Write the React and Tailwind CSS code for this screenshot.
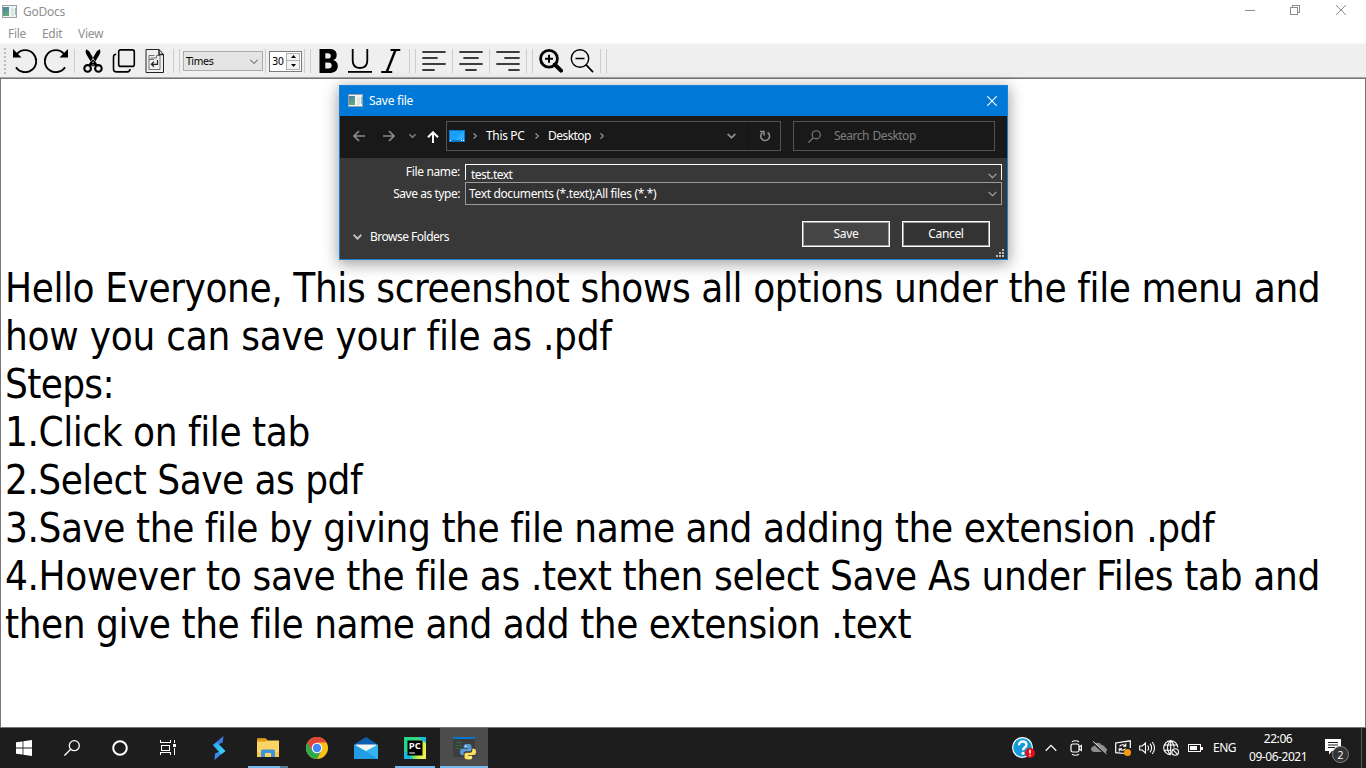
import React from "react";

const Icon = ({ className = "", size = 24, w, h, box, children, ...rest }) => (
  <svg
    width={w || size}
    height={h || size}
    viewBox={box || `0 0 ${w || size} ${h || size}`}
    fill="none"
    stroke="currentColor"
    className={`shrink-0 ${className}`}
    {...rest}
  >
    {children}
  </svg>
);

const Sep = ({ className = "ml-[6px]" }) => (
  <div className={`h-6 w-px shrink-0 bg-[#cdcdcd] ${className}`} />
);

const AppIcon = ({ className = "" }) => (
  <Icon w={15} h={13} className={className} stroke="none">
    <defs>
      <linearGradient id="appwin" x1="0" y1="0" x2="0.4" y2="1">
        <stop offset="0" stopColor="#4d7fae" />
        <stop offset="1" stopColor="#5fa879" />
      </linearGradient>
    </defs>
    <rect width="15" height="13" fill="#9aa3aa" />
    <rect x="1" y="1" width="13" height="11" fill="#f1f3f4" />
    <rect x="1" y="2" width="6" height="9" fill="url(#appwin)" />
    <rect x="9" y="3" width="3" height="8" fill="#dfe5e8" />
    <rect x="13" y="3" width="1" height="7" fill="#94bda8" />
  </Icon>
);

const TitleBar = () => (
  <div className="flex h-[23px] items-center bg-white text-[12px] text-[#8f8f8f]">
    <AppIcon className="mb-px ml-[2px]" />
    <span className="ml-[6px] tracking-[-0.25px]">GoDocs</span>
    <div className="mb-[3px] ml-auto flex h-5 items-center gap-[35px] pr-5 text-[#8c8c8c]">
      <Icon size={10} shapeRendering="crispEdges"><path d="M0 5.5h10" /></Icon>
      <Icon size={10} shapeRendering="crispEdges"><path d="M.5 2.5h7v7h-7zM2.5 2.5v-2h7v7h-2" /></Icon>
      <Icon size={10} className="ml-[1px]"><path d="M0 0l10 10M10 0L0 10" /></Icon>
    </div>
  </div>
);

const MenuBar = () => (
  <div className="flex h-[22px] items-center border-b-2 border-[#f4f4f4] bg-white pt-[2px] text-[12px] tracking-[-0.3px] text-[#8f8f8f]">
    <span className="ml-2 w-[34px]">File</span>
    <span className="w-9">Edit</span>
    <span>View</span>
  </div>
);

const AlignIcon = ({ d }) => (
  <Icon className="ml-[6px] text-[#3c3c3c]" strokeWidth="1.8" strokeLinecap="round"><path d={d} /></Icon>
);

const ToolBar = () => (
  <div className="flex h-[33px] items-center border-b border-[#a6a6a6] bg-[#efefef] text-black">
    <Icon w={2} h={26} className="ml-[4px] text-[#bcbcbc]" strokeWidth="2" strokeDasharray="2 2"><path d="M1 0v26" /></Icon>
    <Icon className="ml-[7px]" strokeWidth="1.9">
      <path d="M4 4.8A11 11 0 1 1 3 18.2" />
      <path d="M0 0l8.500 8.500H0z" fill="currentColor" stroke="none" />
    </Icon>
    <Icon className="ml-[7px]" strokeWidth="1.9">
      <path d="M20 4.8A11 11 0 1 0 21 18.2" />
      <path d="M24 0l-8.500 8.500h8.500z" fill="currentColor" stroke="none" />
    </Icon>
    <Sep />
    <Icon className="ml-[6px]" strokeWidth="2.1">
      <path d="M5.300 0.300c-1.200 2-.6 4 .6 6l6.800 11.200 2.400-3.500L8.200 2.200zM18.700.300c1.200 2 .6 4-.6 6l-6.800 11.200-2.400-3.500 6.900-11.800z" fill="currentColor" stroke="none" />
      <circle cx="6.600" cy="19.400" r="3.300" />
      <circle cx="17.400" cy="19.400" r="3.300" />
      <path d="M8.500 16.500l3.500-4 3.500 4" strokeWidth="3" />
      <circle cx="12" cy="13.200" r=".7" fill="#efefef" stroke="none" />
    </Icon>
    <Icon className="ml-[7px]" strokeWidth="1.600">
      <rect x="6.700" y=".9" width="15.600" height="16.500" rx="2" />
      <path d="M4.200 5.200c-2 0-2.700.7-2.700 2.700v12c0 2.300.8 3 3 3h10.500c2 0 3-.8 3-2.800" />
    </Icon>
    <Icon className="ml-[7px] text-[#222]" strokeWidth="1">
      <path d="M3 .5h13l4.500 5v18H3z" />
      <path d="M16 .5v5h4.500" strokeWidth="1.500" />
      <path d="M11.500 6.500H6v14h11v-14h-3.500v2.500h-6M6 10.500h5" strokeOpacity=".6" />
      <path d="M14.500 11v4.300H8.500M11 12.800l-2.600 2.500 2.600 2.500" strokeWidth="1.200" />
    </Icon>
    <Sep />
    <Sep className="ml-[5px]" />
    <div className="ml-[3px] flex h-5 w-20 shrink-0 items-center border border-[#acacac] bg-[#e4e4e4] pl-[2px] font-['DejaVu_Sans_Condensed','DejaVu_Sans',sans-serif] text-[11px]">
      <span className="pt-[2px] tracking-[-0.35px]">Times</span>
      <Icon w={8} h={5} className="ml-auto mr-[4px] text-[#444]"><path d="M0 .5l4 4 4-4" /></Icon>
    </div>
    <Sep className="ml-[2px]" />
    <div className="ml-[3px] flex h-[21px] w-[33px] shrink-0 items-center border border-[#7a7a7a] bg-white pl-[2px] font-['DejaVu_Sans_Condensed','DejaVu_Sans',sans-serif] text-[11px]">
      <span className="pt-[2px] tracking-[-0.5px]">30</span>
      <div className="ml-auto mr-px flex h-[17px] w-[14px] flex-col items-center justify-around border border-[#b0b0b0] bg-[#f3f3f3]">
        <Icon w={5} h={3} stroke="none"><path d="M2.500 0L5 3H0z" fill="#000" /></Icon>
        <div className="h-px w-full bg-[#b0b0b0]" />
        <Icon w={5} h={3} stroke="none"><path d="M2.500 3L5 0H0z" fill="#000" /></Icon>
      </div>
    </div>
    <Sep className="ml-[2px]" />
    <Sep className="ml-[5px]" />
    <Icon className="ml-[6px]" stroke="none">
      <path fillRule="evenodd" fill="currentColor" d="M2.500 0H12c5 0 7.700 2 7.700 5.900 0 2.800-1.400 4.600-3.800 5.100 3 .5 4.900 2.600 4.900 6 0 4.700-3.200 7-8.600 7H2.500zM8.300 4.300v5.300h2.600c1.900 0 2.900-.9 2.900-2.700 0-1.800-1-2.600-3-2.600zm0 9.200v6h3c2.300 0 3.400-1 3.400-3s-1.100-3-3.400-3z" />
    </Icon>
    <Icon className="ml-[7px]" strokeWidth="1.800">
      <path d="M4.700 0v11.500c0 5 2.700 7.500 7.300 7.500s7.300-2.500 7.300-7.500V0" />
      <path d="M0 22.900h24" />
    </Icon>
    <Icon className="ml-[7px]" strokeWidth="1.800">
      <path d="M11.500 1h9.800M2.200 23h11" />
      <path d="M16.500 1L7.700 23" strokeWidth="2.400" />
    </Icon>
    <Sep />
    <Sep className="ml-[5px]" />
    <AlignIcon d="M1 3h22M1 9h14M1 15h22M1 21h11" />
    <Sep />
    <AlignIcon d="M1 3h22M5 9h14M1 15h22M7 21h10" />
    <Sep />
    <AlignIcon d="M1 3h22M9 9h14M1 15h22M13 21h10" />
    <Sep />
    <Sep className="ml-[5px]" />
    <Icon className="ml-[6px]" strokeWidth="2.800">
      <circle cx="10" cy="9.800" r="8.400" />
      <path d="M10 5.800v8M6 9.800h8" strokeWidth="2" />
      <path d="M15.800 15.500l6.200 6.200" strokeWidth="4" strokeLinecap="round" />
    </Icon>
    <Icon className="ml-[7px]" strokeWidth="1.400">
      <circle cx="10" cy="9.500" r="8.700" />
      <path d="M5.500 9.500h9M16.200 15.800l6.800 7.400" strokeWidth="1.700" />
    </Icon>
    <Sep />
    <Sep className="ml-[5px]" />
  </div>
);

const LINES = [
  ["Hello Everyone, This screenshot shows all options under the file menu and", "tracking-[-0.4px]"],
  ["how you can save your file as .pdf", "tracking-[-0.26px]"],
  ["Steps:", "tracking-[-0.65px]"],
  ["1.Click on file tab", "tracking-[-0.43px]"],
  ["2.Select Save as pdf", "tracking-[-0.5px]"],
  ["3.Save the file by giving the file name and adding the extension .pdf", "tracking-[-0.43px]"],
  ["4.However to save the file as .text then select Save As under Files tab and", "tracking-[-0.36px]"],
  ["then give the file name and add the extension .text", "tracking-[-0.45px]"],
];

const Editor = () => (
  <div className="h-[650px] border border-[#767676] bg-white pl-1 pt-[185px] font-['DejaVu_Sans_Condensed','DejaVu_Sans',sans-serif] text-[40px] leading-[48px] text-black">
    {LINES.map(([text, cls]) => (
      <div key={text} className="whitespace-pre">
        <span className={cls}>{text}</span>
      </div>
    ))}
  </div>
);

const Crumb = ({ className = "" }) => (
  <Icon w={4} h={6} className={`text-[#8c8c8c] ${className}`} strokeWidth="1.400"><path d="M.5.3L3.300 3 .5 5.700" /></Icon>
);

const Down = ({ className, w = 9, sw = 1.7 }) => (
  <Icon w={w} h={6} box="0 0 9 6" className={className} strokeWidth={sw}><path d="M.6.8l3.900 3.900L8.400.8" /></Icon>
);

const SaveDialog = () => (
  <div className="absolute left-[339px] top-[85px] flex h-[175px] w-[669px] flex-col border border-[#1680d8] bg-[#383838] text-[12px] tracking-[-0.35px] text-white shadow-[0_3px_14px_1px_rgba(0,0,0,0.38)]">
    <div className="flex h-[30px] shrink-0 items-center bg-[#0078d7] pb-px pl-2 pr-[10px]">
      <AppIcon />
      <span className="ml-[6px] mt-px tracking-[-0.25px]">Save file</span>
      <Icon size={10} className="ml-auto" strokeWidth="1.200"><path d="M.3.3l9.400 9.400M9.700.3L.3 9.700" /></Icon>
    </div>
    <div className="flex h-[42px] shrink-0 items-center bg-[#191919] pb-[2px]">
      <Icon size={12} className="ml-[13px] text-[#8a8a8a]" strokeWidth="1.700"><path d="M12 6H1M6 1L1 6l5 5" /></Icon>
      <Icon size={12} className="ml-[18px] text-[#8a8a8a]" strokeWidth="1.700"><path d="M0 6h11M6 1l5 5-5 5" /></Icon>
      <Down w={7} sw={2} className="ml-[14px] text-[#777]" />
      <Icon size={12} className="ml-[11px] mt-[2px]" strokeWidth="2"><path d="M6 12V1.300M1 6.300l5-5 5 5" /></Icon>
      <div className="ml-[7px] flex h-[30px] w-[335px] items-center border border-[#535353] pl-[2px]">
        <Icon w={16} h={12} stroke="none" className="mb-px">
          <rect width="16" height="12" fill="#0a78d0" />
          <path d="M1 1h14v9H1z" fill="#18a0fb" />
          <path d="M15 1v9H6z" fill="#2eadff" />
          <path d="M1 10h1v1H1zM12 10h1v1h-1zM14 10h1v1h-1z" fill="#fff" />
        </Icon>
        <Crumb className="ml-[8px]" />
        <span className="ml-[9px] w-[49px] whitespace-nowrap">This PC</span>
        <Crumb />
        <span className="ml-[9px] w-[52px] whitespace-nowrap tracking-[-0.550px]">Desktop</span>
        <Crumb />
        <Down className="ml-auto text-[#8c8c8c]" />
        <div className="ml-[11px] h-7 w-px bg-[#131313]" />
        <Icon size={12} className="ml-[11px] mr-[9px] text-[#8c8c8c]" strokeWidth="1.600">
          <path d="M8.600 2.500A4.400 4.400 0 1 1 3.400 2.700M1 1.500h4v4" />
        </Icon>
      </div>
      <div className="ml-3 flex h-[30px] w-[202px] items-center border border-[#535353] text-[#7f7f7f]">
        <Icon size={13} className="ml-[14px]" strokeWidth="1.100">
          <circle cx="8.200" cy="4.800" r="4.100" />
          <path d="M5.200 7.800L.5 12.500" />
        </Icon>
        <span className="ml-[13px] tracking-[-0.5px] [word-spacing:1px]">Search Desktop</span>
      </div>
    </div>
    <div className="mt-[6px] flex h-4 shrink-0">
      <span className="w-[120px] text-right leading-[16px]">File name:</span>
      <div className="ml-[5px] flex h-4 w-[537px] items-end border border-b-0 border-white pl-[5px] pr-1">
        <span className="h-[14px] leading-[17px] tracking-[-0.5px]">test.text</span>
        <Down sw={1.2} className="mb-px ml-auto text-[#a5a5a5]" />
      </div>
    </div>
    <div className="mt-[2px] flex h-[23px] shrink-0">
      <span className="w-[120px] text-right leading-[23px] tracking-[-0.450px]">Save as type:</span>
      <div className="ml-[5px] flex w-[537px] items-center border border-[#9b9b9b] bg-[#333] pl-[3px] pr-1">
        <span>Text documents (*.text);All files (*.*)</span>
        <Down sw={1.2} className="ml-auto text-[#a5a5a5]" />
      </div>
    </div>
    <div className="mt-4 flex h-[26px] shrink-0">
      <Down sw={2} className="ml-[13px] mt-[13px] text-[#bdbdbd]" />
      <span className="ml-2 mt-[6px] h-5 leading-[20px] tracking-[-0.5px]">Browse Folders</span>
      <div className="ml-auto grid h-[26px] w-[88px] place-items-center border border-white bg-[#454545] shadow-[inset_0_0_0_1px_#a0a0a0]">Save</div>
      <div className="ml-3 mr-[17px] grid h-[26px] w-[88px] place-items-center border border-white bg-[#333] shadow-[inset_0_0_0_1px_#a0a0a0]">Cancel</div>
    </div>
    <Icon size={8} stroke="none" className="ml-auto mr-[3px] mt-[2px]">
      <path d="M6 0h2v2H6zM3 3h2v2H3zM6 3h2v2H6zM0 6h2v2H0zM3 6h2v2H3zM6 6h2v2H6z" fill="#bdbdbd" />
    </Icon>
  </div>
);

const Slot = ({ className = "", children }) => (
  <div className={`relative grid h-10 w-12 shrink-0 place-items-center ${className}`}>{children}</div>
);

const Bar = ({ className = "inset-x-1" }) => (
  <div className={`absolute bottom-0 h-[2px] bg-[#76b9ed] ${className}`} />
);

const Taskbar = () => (
  <div className="flex h-10 items-center bg-[#1d1d1d] text-white">
    <Slot>
      <Icon size={16} stroke="none"><path d="M0 2.300l6.600-.9v6.200H0zM7.400 1.300L16 0v7.600H7.400zM0 8.400h6.600v6.200L0 13.700zM7.400 8.400H16V16l-8.600-1.300z" fill="#fff" /></Icon>
    </Slot>
    <Slot>
      <Icon size={16} strokeWidth="1.300"><circle cx="10.300" cy="5.700" r="5" /><path d="M6.700 9.300L.4 15.600" /></Icon>
    </Slot>
    <Slot><Icon size={16} strokeWidth="2"><circle cx="8" cy="8" r="6.800" /></Icon></Slot>
    <Slot>
      <Icon size={16} strokeWidth="1" shapeRendering="crispEdges">
        <path d="M.5 0v2.500h10V0M.5 15v-2.500h10V15M1.500 5.500h8v5h-8zM14.500 0v3M14.500 8v7" />
        <path d="M13 4h3v3h-3z" fill="#fff" stroke="none" />
      </Icon>
    </Slot>
    <div className="ml-[3px] flex gap-px">
      <Slot>
        <Icon w={14} h={24} stroke="none">
          <defs>
            <linearGradient id="bolt" x1="0" y1="0" x2="1" y2="1">
              <stop offset="0" stopColor="#2f9df4" /><stop offset="1" stopColor="#35e0f5" />
            </linearGradient>
          </defs>
          <path d="M11.500 0L.8 9l3 .5 7-3z" fill="#3b7be0" />
          <path d="M2.500 24L13 15l-3-.5-7 3z" fill="#3b8be8" />
          <path d="M.8 9l4.200-2.800 8.500 8.800-4.300 3.300z" fill="url(#bolt)" />
        </Icon>
      </Slot>
      <Slot>
        <Icon w={22} h={20} stroke="none" className="-ml-[1px]">
          <path d="M0 2V1.500Q0 .5 1 .5h7.500l2 2H22V19H0z" fill="#fbd465" />
          <path d="M0 2.500V.5h9l1.300 1.700L8.500 3.500H0z" fill="#e59b12" />
          <path d="M0 14h22v4.500H0z" fill="#f7c64b" />
          <path d="M4 19v-6q0-1.500 1.500-1.500h11Q18 11.500 18 13v6h-4v-4H8v4z" fill="#3b94dc" />
          <path d="M8 15h6v4H8z" fill="#fbd465" />
        </Icon>
        <Bar className="left-1 w-8" />
        <Bar className="left-9 w-2 opacity-60" />
      </Slot>
      <Slot>
        <Icon size={22} stroke="none">
          <circle cx="11" cy="11" r="11" fill="#fbc116" />
          <path d="M1.474 5.500A11 11 0 0 0 11 22l4.500-8.500L11 11z" fill="#2da94f" />
          <path d="M1.474 5.500A11 11 0 0 1 20.526 5.500H11L6.200 13.700z" fill="#e0453a" />
          <circle cx="11" cy="11" r="5.300" fill="#fff" />
          <circle cx="11" cy="11" r="4.200" fill="#4386f5" />
        </Icon>
      </Slot>
      <Slot>
        <Icon w={24} h={22} stroke="none">
          <path d="M0 7.500L12 0l12 7.500V22H0z" fill="#0a5fae" />
          <path d="M1.500 7.500h21V16h-21z" fill="#f4f4f4" />
          <path d="M0 7.500L12 14l12-6.500V22H0z" fill="#35b3ee" />
          <path d="M0 7.500L24 22H0z" fill="#1c94de" opacity=".75" />
        </Icon>
      </Slot>
      <Slot>
        <Icon size={22} stroke="none">
          <defs>
            <linearGradient id="pych" x1="0" y1=".3" x2="1" y2=".7">
              <stop offset="0" stopColor="#21d789" /><stop offset=".5" stopColor="#3fd67a" /><stop offset=".8" stopColor="#d9ee4f" /><stop offset="1" stopColor="#f3f04c" />
            </linearGradient>
          </defs>
          <rect width="22" height="22" fill="url(#pych)" />
          <path d="M0 13v9h9zM14 0h8v6z" fill="#15b9dd" />
          <rect x="3.500" y="3.500" width="15" height="15" fill="#000" />
          <text x="4.700" y="12" fill="#fff" fontSize="8.500" fontWeight="700" fontFamily="Open Sans, sans-serif" textLength="12" lengthAdjust="spacingAndGlyphs">PC</text>
          <path d="M5.300 15.500H11V16.500H5.300z" fill="#fff" />
        </Icon>
        <Bar />
      </Slot>
      <Slot className="bg-[#4c4c4c]">
        <Icon w={24} h={24} stroke="none">
          <path d="M1 1h22v20H1z" fill="#3b3d3f" />
          <path d="M1 1h22v2H1z" fill="#0b76ca" />
          <path d="M4 6h6v1H4zM3 9h7v1H3zM4 12h5v1H4z" fill="#2e6b3b" />
          <path d="M15.500 8c-3.500 0-3.700 1-3.700 2.300V12h4v.7h-5.600C8.500 12.700 8 14 8 16s.8 3.200 2.200 3.200h1.500V17.500c0-1.500 1-2.200 2.300-2.200h3.800c1 0 1.700-.8 1.700-1.800v-3C19.500 8.500 18 8 15.500 8z" fill="#5b9bd5" />
          <path d="M16.500 23.500c3.500 0 3.700-1 3.700-2.300v-1.500h-4v-.7h5.600c1.700 0 2.200-1.200 2.200-3.200s-.8-3-2.200-3h-1.500v1.800c0 1.500-1 2.200-2.300 2.200h-3.800c-1 0-1.700.8-1.700 1.800v2.500c0 1.900 1.500 2.400 4 2.400z" fill="#ffe05c" />
          <circle cx="13.700" cy="10.200" r=".8" fill="#fff" /><circle cx="18.300" cy="21.600" r=".8" fill="#fff" />
        </Icon>
        <Bar className="inset-x-0" />
      </Slot>
    </div>

    <div className="ml-auto flex h-10 items-center">
      <Icon w={23} h={22} stroke="none">
        <circle cx="10.500" cy="10.500" r="10.500" fill="#fff" />
        <circle cx="10.500" cy="10.500" r="9.300" fill="#139bd8" />
        <path d="M7 8.300c0-2.400 1.400-3.800 3.700-3.800s3.700 1.300 3.700 3.200c0 2.800-3.400 2.800-3.400 5.500" stroke="#fff" strokeWidth="2.300" fill="none" />
        <circle cx="11" cy="16.200" r="1.500" fill="#fff" />
        <circle cx="18" cy="16" r="5" fill="#e30b16" />
        <path d="M18 12.800v3.700M18 17.700v1.500" stroke="#fff" strokeWidth="1.500" />
      </Icon>
      <Icon w={12} h={8} className="ml-[10px]" strokeWidth="1.300"><path d="M.7 6.700L6 1.400l5.300 5.300" /></Icon>
      <Icon w={12} h={16} className="ml-[13px]" strokeWidth="1.200">
        <rect x="1" y="4" width="8" height="8" rx="1.800" />
        <path d="M9 7l2.400-1.500v5L9 9M2 1.700Q5.500-.2 9 1.700M2 14.300q3.500 1.900 7 0" />
      </Icon>
      <Icon w={16} h={14} className="ml-[9px]" stroke="none">
        <path d="M3.500 11C1.500 11 0 9.800 0 8.200 0 6.500 1.200 5.500 2.600 5.400 3 3 4.700 1.700 6.800 1.700c1.800 0 3 .8 3.800 2.200 2.200 0 3.400 1.300 3.500 2.900 1.300.2 1.900 1 1.900 2.100 0 1.300-1 2.100-2.200 2.100z" fill="#8d8d8d" />
        <path d="M1 .8l14 12.500" stroke="#1d1d1d" strokeWidth="2" /><path d="M2 .3l13.500 12.500" stroke="#e5e5e5" strokeWidth="1" />
      </Icon>
      <Icon w={17} h={16} className="ml-[8px]" strokeWidth="1.200">
        <path d="M10 13.500L.7 12.700V3L15.300.8V8" />
        <path d="M4.500 6.500C6 4.200 9 4.200 10.500 6M10.800 3.500v2.800H8M10.500 8.500c-1.500 2.200-4.500 2.200-6 .4M4.200 11.500V8.700H7" strokeWidth="1.100" />
        <circle cx="12.500" cy="12.500" r="3.500" fill="#f8990d" stroke="none" />
      </Icon>
      <Icon w={17} h={14} className="ml-[7px]" strokeWidth="1.100">
        <path d="M.7 5h2.500L6.500 2v10L3.200 9H.7zM8.700 4.500q1.700 2.500 0 5M11 2.700q3.200 4.300 0 8.600M13.300 1q4.500 6 0 12" />
      </Icon>
      <Icon w={17} h={16} className="ml-[7px]" strokeWidth="1.100">
        <path d="M14.700 7.500a7 7 0 1 0-7 7.200M7.700.7C3.500 4 3.500 11.400 7.700 14.700M7.700.7c2 1.600 3.300 4 3.300 6.800M1.300 5h12.600M1.300 10.200h7M7.700.7v14" />
        <circle cx="12.200" cy="12" r="3.300" fill="#1d1d1d" /><path d="M9.900 9.700l4.600 4.600" />
      </Icon>
      <Icon w={16} h={10} className="ml-[8px]" shapeRendering="crispEdges">
        <path d="M.5 1.500h12v7H.5z" /><path d="M2 3h7v4H2zM13 3.500h1.500v3H13z" fill="#fff" stroke="none" />
      </Icon>
      <span className="ml-[9px] w-[24px] text-[12px] tracking-[-0.500px]">ENG</span>
      <div className="ml-[12px] w-[58px] whitespace-nowrap text-center text-[12px] leading-[18px] tracking-[-0.450px]">
        <div>22:06</div>
        <div>09-06-2021</div>
      </div>
      <Icon w={25} h={25} className="ml-[18px] mt-[6px]" stroke="none">
        <path d="M0 0h16v12H7l-3 3.500V12H0z" fill="#fff" />
        <path d="M3 3.500h10M3 6h10M3 8.500h7" stroke="#1d1d1d" />
        <circle cx="15.500" cy="15.500" r="8" fill="#333" stroke="#858585" />
        <text x="15.500" y="19.500" textAnchor="middle" fill="#fff" fontSize="11" fontFamily="Open Sans, sans-serif">2</text>
      </Icon>
      <div className="ml-[11px] mr-1 h-10 w-px bg-[#5a5a5a]" />
    </div>
  </div>
);

export default function App() {
  return (
    <div className="relative flex h-[768px] w-[1366px] flex-col overflow-hidden bg-white font-['Noto_Sans',sans-serif]">
      <TitleBar />
      <MenuBar />
      <ToolBar />
      <Editor />
      <Taskbar />
      <SaveDialog />
    </div>
  );
}
